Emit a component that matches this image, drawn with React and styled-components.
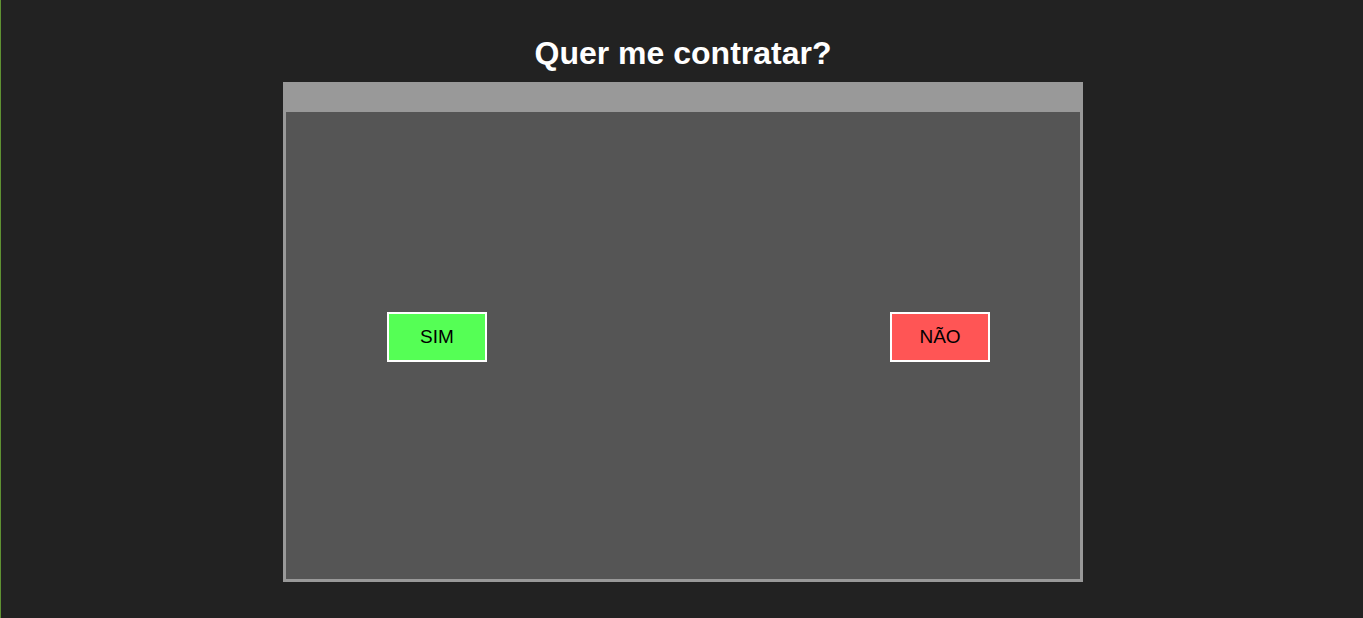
import React from "react"
import styled, { createGlobalStyle } from "styled-components"

const GlobalStyle = createGlobalStyle`
  html, body {
    margin: 0;
    padding: 0;
    height: 100%;
    background: #222222;
  }

  body {
    border-left: 1px solid #5f9132;
    box-sizing: border-box;
    font-family: "Liberation Sans", Arial, sans-serif;
  }
`

export const Page = styled.main`
  display: flex;
  flex-direction: column;
  align-items: center;
  min-height: 618px;
  padding-left: 2px;
`

export const Title = styled.h1`
  margin: 35px 0 10px;
  font-size: 32px;
  line-height: 37px;
  font-weight: bold;
  color: #ffffff;
`

export const Window = styled.section`
  width: 800px;
  height: 500px;
  box-sizing: border-box;
  border: 3px solid #999999;
  background: #555555;
  display: flex;
  flex-direction: column;
`

export const TitleBar = styled.div`
  height: 27px;
  background: #999999;
`

export const Stage = styled.div`
  flex: 1;
  display: flex;
  justify-content: space-between;
  align-items: flex-start;
  padding: 200px 90px 0 101px;
`

export const Choice = styled.button`
  width: 100px;
  height: 50px;
  box-sizing: border-box;
  border: 2px solid #ffffff;
  background: ${(props) => (props.$yes ? "#55ff55" : "#ff5555")};
  color: #000000;
  font-family: "Liberation Sans", Arial, sans-serif;
  font-size: 19px;
  cursor: pointer;
`

const App = () => {
  return (
    <>
      <GlobalStyle />
      <Page>
        <Title>Quer me contratar?</Title>
        <Window>
          <TitleBar />
          <Stage>
            <Choice $yes>SIM</Choice>
            <Choice>NÃO</Choice>
          </Stage>
        </Window>
      </Page>
    </>
  )
}

export default App
